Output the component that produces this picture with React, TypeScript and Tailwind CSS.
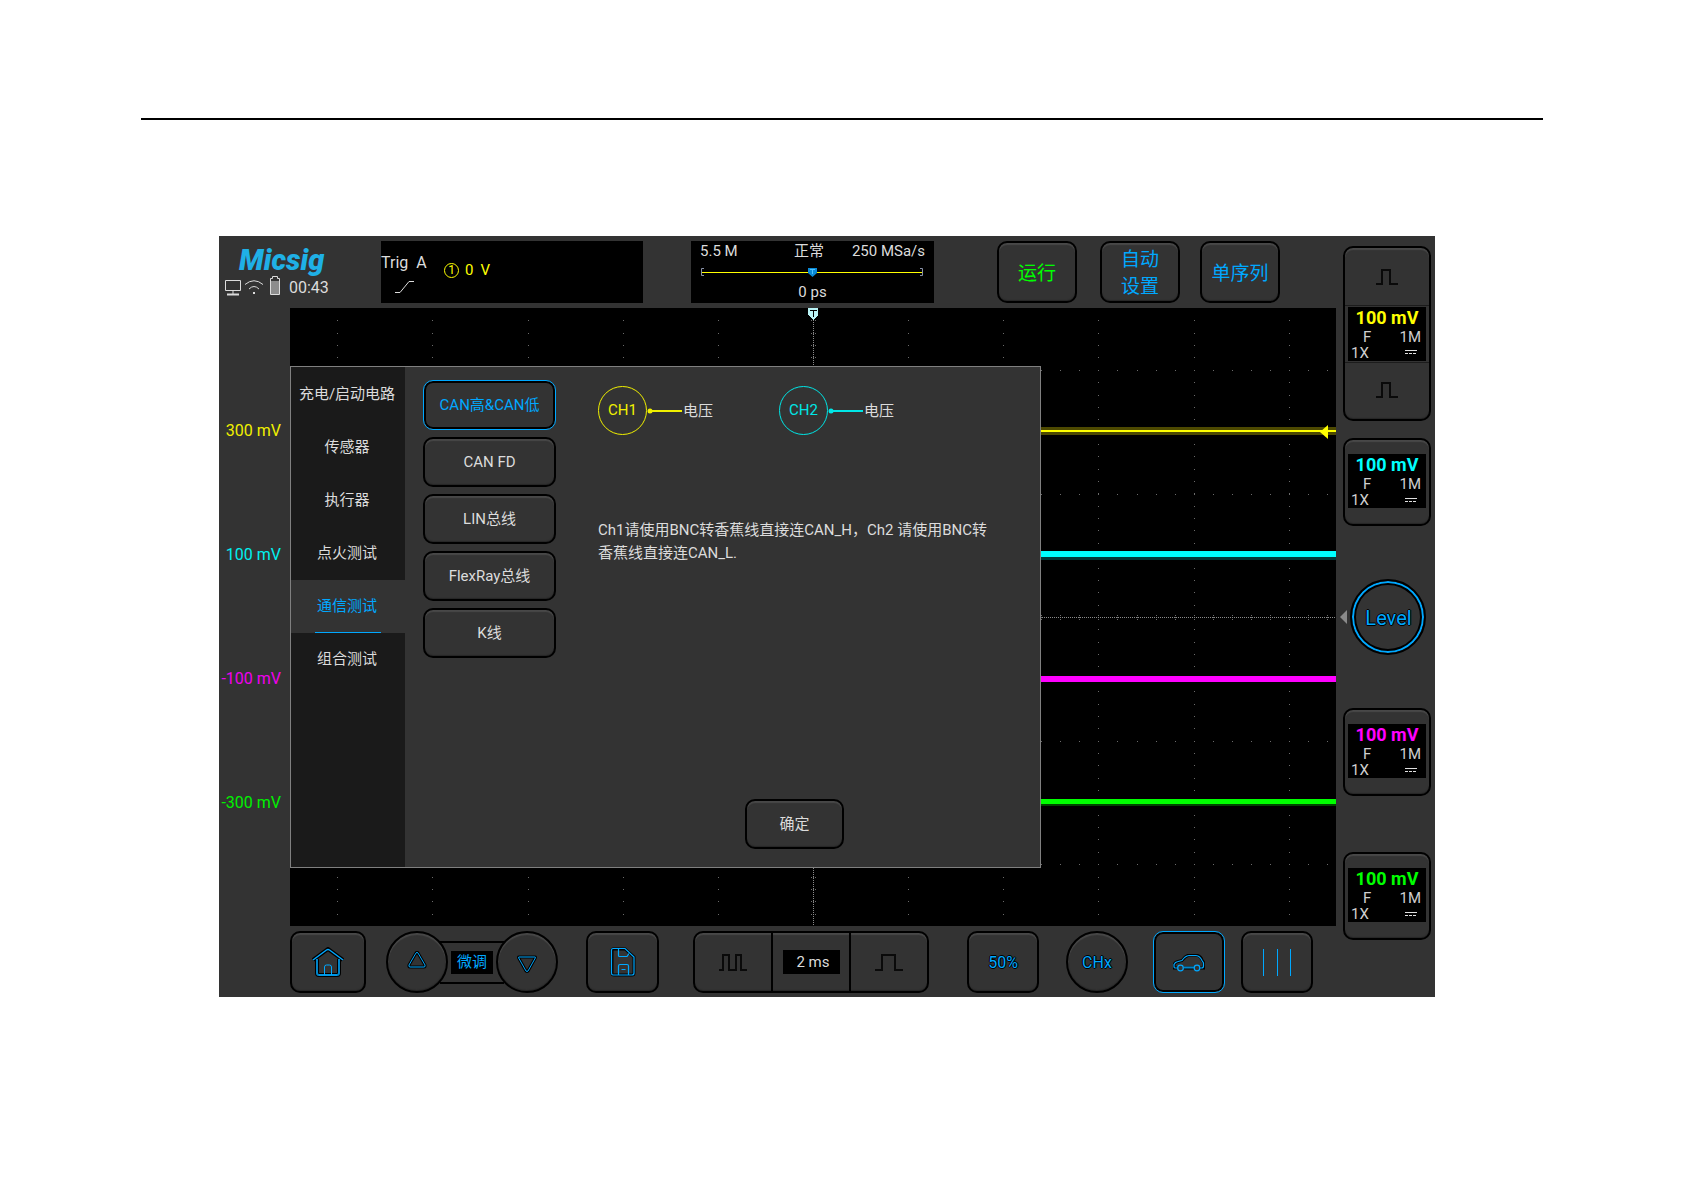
import React, { useState } from "react";
import clsx from "clsx";

const KEY =
  "bg-[#333333] border-2 border-black shadow-[inset_0_2px_1px_#484848,inset_0_-1px_1px_#262626] shrink-0 flex items-center justify-center";
const KEY_ACTIVE =
  "bg-[#333333] border border-[#00a8ff] shadow-[inset_0_0_0_2px_#000] shrink-0 flex items-center justify-center";
const OUTLINED =
  "[text-shadow:1px_0_#000,-1px_0_#000,0_1px_#000,0_-1px_#000]";

const categories = [
  "充电/启动电路",
  "传感器",
  "执行器",
  "点火测试",
  "通信测试",
  "组合测试",
];

const buses = ["CAN高&CAN低", "CAN FD", "LIN总线", "FlexRay总线", "K线"];

// graticule: 11 columns, 5 rows, with 5 x 10 subdivisions
function buildGrid() {
  let dots = "";
  for (let c = -5; c <= 5; c++) {
    for (let i = 1; i < 50; i++) {
      dots += `M${Math.round(523 + c * 95.15)} ${Math.round(i * 12.36)}h1v1h-1z`;
    }
  }
  for (let r = 0; r < 5; r++) {
    for (let i = -27; i <= 27; i++) {
      dots += `M${Math.round(523 + i * 19.03)} ${Math.round(62 + r * 123.6)}h1v1h-1z`;
    }
  }
  let ticks = "";
  for (let i = 1; i < 50; i++) {
    const y = Math.round(i * 12.36);
    ticks += `M521 ${y}h1v1h-1zM525 ${y}h1v1h-1z`;
  }
  for (let i = -27; i <= 27; i++) {
    const x = Math.round(523 + i * 19.03);
    ticks += `M${x} 307h1v1h-1zM${x} 311h1v1h-1z`;
  }
  return dots + ticks;
}

const GRID = buildGrid();

function Scope() {
  return (
    <svg
      viewBox="0 0 1046 618"
      preserveAspectRatio="none"
      shapeRendering="crispEdges"
      className="block w-full h-[618px] bg-black"
    >
      <path d={GRID} fill="#6b6b6b" />
      <path d="M523.5 10V618" stroke="#8a8a8a" strokeDasharray="1 1" />
      <path d="M0 309.5H1046" stroke="#8a8a8a" strokeDasharray="1 1" />
      <rect y="119" width="1046" height="8" fill="#4d4900" />
      <rect y="122" width="1046" height="2" fill="#ffff00" />
      <rect y="243" width="1046" height="6" fill="#00ffff" />
      <rect y="249" width="1046" height="3" fill="#003a3a" />
      <rect y="368" width="1046" height="6" fill="#ff00ff" />
      <rect y="491" width="1046" height="5" fill="#00ff00" />
      <rect y="496" width="1046" height="2" fill="#004400" />
      <path d="M1030 124l8 -7v14z" fill="#ffff00" shapeRendering="auto" />
      <path d="M518 0h10v7l-5 5l-5 -5z" fill="#b9f3f5" />
      <path d="M520 2.5h7M523.5 2v7" stroke="#000" />
    </svg>
  );
}

function PulseIcon() {
  return (
    <svg width="22" height="18" viewBox="0 0 22 18">
      <path
        d="M0 16h6V2h8v14h8"
        fill="none"
        stroke="#0a0a0a"
        strokeWidth="2"
      />
    </svg>
  );
}

type ReadoutProps = { color: string };

function Readout({ color }: ReadoutProps) {
  return (
    <span className="w-[78px] h-[54px] bg-black block text-[#cfcfcf] text-[15px] leading-4 shrink-0">
      <span
        className={clsx(
          "block text-center font-bold text-lg leading-[22px]",
          color
        )}
      >
        100 mV
      </span>
      <span className="flex justify-between pl-[15px] pr-[5px]">
        <span>F</span>
        <span>1M</span>
      </span>
      <span className="flex justify-between items-center pl-[3px] pr-[9px]">
        <span>1X</span>
        <svg width="12" height="5" viewBox="0 0 12 5">
          <path d="M0 .5h12" stroke="#e0e0e0" />
          <path d="M0 3.5h12" stroke="#e0e0e0" strokeDasharray="3 1" />
        </svg>
      </span>
    </span>
  );
}

function ChannelKey({ color }: ReadoutProps) {
  return (
    <button className={clsx(KEY, "w-[88px] h-[88px] rounded-[10px] pb-[2px]")}>
      <Readout color={color} />
    </button>
  );
}

function Probe({ name, line }: { name: string; line: string }) {
  return (
    <div className={clsx("flex items-center w-[181px]", line)}>
      <span className="w-[49px] h-[49px] rounded-full border border-current flex items-center justify-center text-[15px]">
        {name}
      </span>
      <svg width="35" height="6" viewBox="0 0 35 6">
        <circle cx="3" cy="3" r="2.5" fill="currentColor" />
        <path d="M3 3h32" stroke="currentColor" strokeWidth="2" />
      </svg>
      <span className="text-[#dcdcdc] text-[15px] pl-px pt-px">电压</span>
    </div>
  );
}

function TestDialog() {
  const [category, setCategory] = useState("通信测试");
  const [bus, setBus] = useState("CAN高&CAN低");

  return (
    <div
      role="dialog"
      className="absolute left-0 top-[58px] w-[751px] h-[502px] border border-[#808080] bg-[#333333] flex text-[#dcdcdc] text-[15px]"
    >
      <nav className="w-[114px] bg-[#1a1a1a] flex flex-col pt-px">
        {categories.map((c) => (
          <button
            key={c}
            onClick={() => setCategory(c)}
            className={clsx(
              "h-[53px] flex flex-col items-center",
              c === category && "bg-[#333333] text-[#00a8ff]"
            )}
          >
            <span className="flex-1 flex items-center pt-px pr-[2px]">{c}</span>
            <span
              className={clsx(
                "w-[66px] h-px",
                c === category && "bg-[#00a8ff]"
              )}
            />
          </button>
        ))}
      </nav>

      <div className="flex flex-col gap-[7px] pt-[13px] pl-[18px]">
        {buses.map((b) => (
          <button
            key={b}
            onClick={() => setBus(b)}
            className={clsx(
              "w-[133px] h-[50px] rounded-[10px]",
              b === bus ? [KEY_ACTIVE, "text-[#00a8ff]"] : KEY
            )}
          >
            {b}
          </button>
        ))}
      </div>

      <div className="flex-1 flex flex-col pt-[19px] pl-[42px] pr-10 pb-[18px]">
        <div className="flex">
          <Probe name="CH1" line="text-[#f0f000]" />
          <Probe name="CH2" line="text-[#00e6e6]" />
        </div>
        <p className="mt-[84px] leading-[23px]">
          Ch1请使用BNC转香蕉线直接连CAN_H，Ch2 请使用BNC转
          <br />
          香蕉线直接连CAN_L.
        </p>
        <button
          className={clsx(
            KEY,
            "w-[99px] h-[50px] rounded-[10px] mt-auto ml-[147px]"
          )}
        >
          确定
        </button>
      </div>
    </div>
  );
}

function Header() {
  return (
    <header className="col-span-2 flex pt-[5px] h-[72px] text-[#dcdcdc]">
      <div className="w-[162px] pl-1 shrink-0">
        <div className="pl-4 pt-[3px] text-[29px] leading-[32px] font-black italic text-[#1fb0e6]">
          Micsig
        </div>
        <div className="flex items-center pl-[2px] h-[22px] text-base">
          <svg width="16" height="17" viewBox="0 0 16 17" fill="none">
            <path d="M.5 1.5h15v10h-15zM8 12v3" stroke="#dcdcdc" />
            <path d="M2 15.5h12" stroke="#dcdcdc" strokeWidth="2" />
          </svg>
          <svg
            width="18"
            height="16"
            viewBox="0 0 18 16"
            fill="none"
            stroke="#dcdcdc"
            className="ml-1"
          >
            <path d="M0 5.5Q9 -2 18 5.5M4 10Q9 5 14 10" />
            <path d="M8 14h2" strokeWidth="2" />
          </svg>
          <svg
            width="10"
            height="19"
            viewBox="0 0 10 19"
            className="ml-[7px] mb-[3px]"
          >
            <path d="M.5 2.5h2v-2h5v2h2v16h-9z" fill="none" stroke="#dcdcdc" />
            <rect x="1" y="5" width="8" height="13" fill="#8c8c8c" />
          </svg>
          <span className="ml-[9px] pt-px">00:43</span>
        </div>
      </div>

      <div className="w-[262px] h-[62px] bg-black flex shrink-0">
        <div className="w-[63px] pt-3 text-base leading-5">
          <div className="flex gap-2">
            <span>Trig</span>
            <span>A</span>
          </div>
          <svg
            width="20"
            height="13"
            viewBox="0 0 20 13"
            fill="none"
            stroke="#dcdcdc"
            className="ml-[14px] mt-2"
          >
            <path d="M0 11.5h5L14 .5h5" />
          </svg>
        </div>
        <div className="flex items-center gap-[6px] h-[58px] text-[#ffff00] text-[15px]">
          <span className="w-[15px] h-[15px] rounded-full border border-current text-xs leading-none flex items-center justify-center">
            1
          </span>
          <span className="pt-px">0</span>
          <span className="pl-px pt-px">V</span>
        </div>
      </div>

      <div className="ml-12 w-[243px] h-[62px] bg-black shrink-0 text-[15px] leading-5 px-[9px]">
        <div className="flex justify-between">
          <span className="w-[94px]">5.5 M</span>
          <span>正常</span>
          <span className="w-[101px] text-right">250 MSa/s</span>
        </div>
        <svg width="224" height="21" viewBox="0 0 224 21" fill="none">
          <path d="M4 7.5H1.500v7H4M220 7.500h2.500v7H220" stroke="#8a93a8" />
          <path d="M2 11.500h220" stroke="#ffff00" />
          <path d="M108 7h9v5l-4.500 4l-4.500 -4z" fill="#0a8ad6" />
          <path d="M110 8.500h5M112.500 8v5" stroke="#4cc2ff" />
        </svg>
        <div className="text-center">0 ps</div>
      </div>

      <div className="flex text-[19px] leading-[27px]">
        <button
          className={clsx(
            KEY,
            "ml-[63px] w-20 h-[62px] rounded-[10px] pt-[2px] text-[#00ff00]"
          )}
        >
          运行
        </button>
        <button
          className={clsx(
            KEY,
            "ml-[23px] w-20 h-[62px] rounded-[10px] pt-[2px] text-[#00a8ff]"
          )}
        >
          自动
          <br />
          设置
        </button>
        <button
          className={clsx(
            KEY,
            "ml-5 w-20 h-[62px] rounded-[10px] pt-[2px] text-[#00a8ff]"
          )}
        >
          单序列
        </button>
      </div>
    </header>
  );
}

function ChannelColumn() {
  return (
    <aside className="row-span-3 row-start-1 col-start-3 flex flex-col pl-[7px] pt-[10px]">
      <div className={clsx(KEY, "w-[88px] h-[175px] rounded-[10px] flex-col")}>
        <button
          aria-label="放大"
          className="flex-1 w-full flex items-center justify-center pt-[2px] border-b border-[#1c1c1c]"
        >
          <PulseIcon />
        </button>
        <div className="py-px">
          <Readout color="text-[#ffff00]" />
        </div>
        <button
          aria-label="缩小"
          className="flex-1 w-full flex items-center justify-center pb-[2px] border-t border-[#1c1c1c]"
        >
          <PulseIcon />
        </button>
      </div>
      <div className="mt-[17px]">
        <ChannelKey color="text-[#00ffff]" />
      </div>
      <div className="mt-[53px] -ml-[3px] flex items-center">
        <svg width="8" height="14" viewBox="0 0 8 14">
          <path d="M0 7L7 0v14z" fill="#8a8a8a" />
        </svg>
        <button
          className={clsx(
            "ml-[2px] w-[76px] h-[76px] rounded-full bg-[#333333] border-2 border-black text-[#00a8ff] text-xl pt-px pl-px",
            "shadow-[inset_0_0_0_2px_#00a8ff,inset_0_0_0_4px_#000]",
            OUTLINED
          )}
        >
          Level
        </button>
      </div>
      <div className="mt-[53px]">
        <ChannelKey color="text-[#ff00ff]" />
      </div>
      <div className="mt-14">
        <ChannelKey color="text-[#00ff00]" />
      </div>
    </aside>
  );
}

function Toolbar() {
  return (
    <footer className="col-start-2 flex items-start pt-[5px] h-[71px] text-[#00a8ff]">
      <button
        aria-label="主页"
        className={clsx(KEY, "w-[76px] h-[62px] rounded-[10px]")}
      >
        <svg width="32" height="30" viewBox="0 0 32 30" fill="none">
          <g stroke="#000" strokeWidth="4">
            <path d="M1 13L16 2l15 11M5 12v14q0 2 2 2h18q2 0 2-2V12" />
          </g>
          <g stroke="#00a8ff">
            <path d="M1 13L14.500 3q1.500-1 3 0L31 13" strokeWidth="1.500" />
            <path
              d="M5 12v14q0 2 2 2h18q2 0 2-2V12"
              stroke="#0084c8"
              strokeWidth="2"
            />
            <path d="M7 28h18M12.500 28v-8q0-2 2-2h3q2 0 2 2v8" />
          </g>
        </svg>
      </button>

      <div className="flex items-center ml-5 h-[62px]">
        <button
          aria-label="增加"
          className={clsx(
            KEY,
            "relative z-10 w-[62px] h-[62px] rounded-full pb-1"
          )}
        >
          <svg width="20" height="18" viewBox="0 0 20 18" fill="none">
            <path
              d="M9 2q1-1.500 2 0l7 12q.5 2-1 2H3q-1.500 0-1-2z"
              stroke="#000"
              strokeWidth="3"
            />
            <path
              d="M9 2q1-1.500 2 0l7 12q.5 2-1 2H3q-1.500 0-1-2z"
              stroke="#00a8ff"
            />
          </svg>
        </button>
        <div className="-mx-2 h-[43px] w-16 bg-[#333333] border-y-2 border-black flex items-center justify-center">
          <span className="bg-black w-[42px] h-[23px] text-[15px] leading-[23px] text-center">
            微调
          </span>
        </div>
        <button
          aria-label="减小"
          className={clsx(
            KEY,
            "relative z-10 w-[62px] h-[62px] rounded-full pt-1"
          )}
        >
          <svg width="20" height="18" viewBox="0 0 20 18" fill="none">
            <path
              d="M2 2h16q.8 0 .3 1L11 16q-1 1-2 0L1.700 3q-.5-1 .3-1z"
              stroke="#000"
              strokeWidth="3"
            />
            <path
              d="M2 2h16q.8 0 .3 1L11 16q-1 1-2 0L1.700 3q-.5-1 .3-1z"
              stroke="#00a8ff"
            />
          </svg>
        </button>
      </div>

      <button
        aria-label="保存"
        className={clsx(KEY, "ml-7 w-[73px] h-[62px] rounded-[10px]")}
      >
        <svg width="26" height="30" viewBox="0 0 26 30" fill="none">
          <path
            d="M3 2h12l9 8v16q0 2-2 2H4q-2 0-2-2V3q0-1 1-1z"
            stroke="#000"
            strokeWidth="3"
          />
          <g stroke="#00a8ff" strokeWidth="1.200">
            <path d="M3 1.500h12l9 8.500v16q0 2-2 2H3q-1.500 0-1.500-2V3q0-1.500 1.500-1.500z" />
            <path d="M8.500 2v6.500q0 1 1 1h7.500l2-3" />
            <path d="M8.500 28V19q0-1.500 1.500-1.500h7q1.500 0 1.500 1.500V28M11.500 22.500h4" />
          </g>
        </svg>
      </button>

      <div
        className={clsx(
          KEY,
          "ml-[34px] w-[236px] h-[62px] rounded-[10px] divide-x-2 divide-black"
        )}
      >
        <button
          aria-label="缩小时基"
          className="flex-1 h-full flex items-center justify-center"
        >
          <svg width="28" height="18" viewBox="0 0 28 18" fill="none">
            <path
              d="M0 17h4V2h6v15h7V2h5v15h6"
              stroke="#0a0a0a"
              strokeWidth="2"
            />
          </svg>
        </button>
        <div className="flex-1 h-full flex items-center justify-center">
          <span className="bg-black w-[57px] h-6 pl-1 text-[15px] leading-6 text-center text-[#dcdcdc]">
            2 ms
          </span>
        </div>
        <button
          aria-label="放大时基"
          className="flex-1 h-full flex items-center justify-center"
        >
          <svg width="28" height="18" viewBox="0 0 28 18" fill="none">
            <path d="M0 17h7V2h13v15h8" stroke="#0a0a0a" strokeWidth="2" />
          </svg>
        </button>
      </div>

      <button
        className={clsx(
          KEY,
          OUTLINED,
          "ml-[38px] w-[72px] h-[62px] rounded-[10px] pt-[2px] text-base"
        )}
      >
        50%
      </button>
      <button
        className={clsx(
          KEY,
          OUTLINED,
          "ml-[27px] w-[62px] h-[62px] rounded-full pt-[2px] text-base"
        )}
      >
        CHx
      </button>
      <button
        aria-label="汽车测试"
        className={clsx(
          KEY_ACTIVE,
          "ml-[25px] w-[72px] h-[62px] rounded-[10px] pt-px"
        )}
      >
        <svg width="32" height="18" viewBox="0 0 32 18" fill="none">
          <path
            d="M4 14H1V10.500Q2 8 5 7.500l4-1Q12 2 16 1h7q5 1 6 5l2 3v5h-4M11 14h10"
            stroke="#000"
            strokeWidth="3"
          />
          <g stroke="#00a8ff" strokeWidth="1.200">
            <path d="M4 14H2Q1 14 1 12V10.500Q2 8 5 7.500l4-1Q12 2 16 1.500h7q4 .5 6 5l1.500 2.500v3q0 2-2 2H27" />
            <path d="M11 13.500h10" stroke="#0084c8" strokeWidth="2" />
            <circle cx="7.500" cy="14" r="2.800" />
            <circle cx="24" cy="14" r="2.800" />
          </g>
        </svg>
      </button>
      <button
        aria-label="光标"
        className={clsx(KEY, "ml-4 w-[72px] h-[62px] rounded-[10px]")}
      >
        <svg width="28" height="27" viewBox="0 0 28 27">
          <path d="M.5 0v27M14.500 0v27M27.500 0v27" stroke="#00a8ff" />
        </svg>
      </button>
    </footer>
  );
}

export default function App() {
  return (
    <div className="bg-white pt-[118px] font-['Roboto','Noto_Sans_CJK_SC',sans-serif]">
      <hr className="border-t-2 border-black ml-[141px] mr-[142px]" />
      <main className="mt-[116px] mb-[195px] ml-[219px] mr-[250px] bg-[#333333] grid grid-cols-[71px_1fr_99px] grid-rows-[auto_auto_auto]">
        <Header />
        <div className="col-start-1 row-start-2 flex flex-col gap-[100px] pt-[111px] pr-[9px] text-base leading-6 text-right whitespace-nowrap">
          <span className="text-[#f0f000]">300 mV</span>
          <span className="text-[#00f0f0]">100 mV</span>
          <span className="text-[#f000f0]">-100 mV</span>
          <span className="text-[#00f000]">-300 mV</span>
        </div>
        <div className="relative col-start-2 row-start-2">
          <Scope />
          <TestDialog />
        </div>
        <Toolbar />
        <ChannelColumn />
      </main>
    </div>
  );
}
